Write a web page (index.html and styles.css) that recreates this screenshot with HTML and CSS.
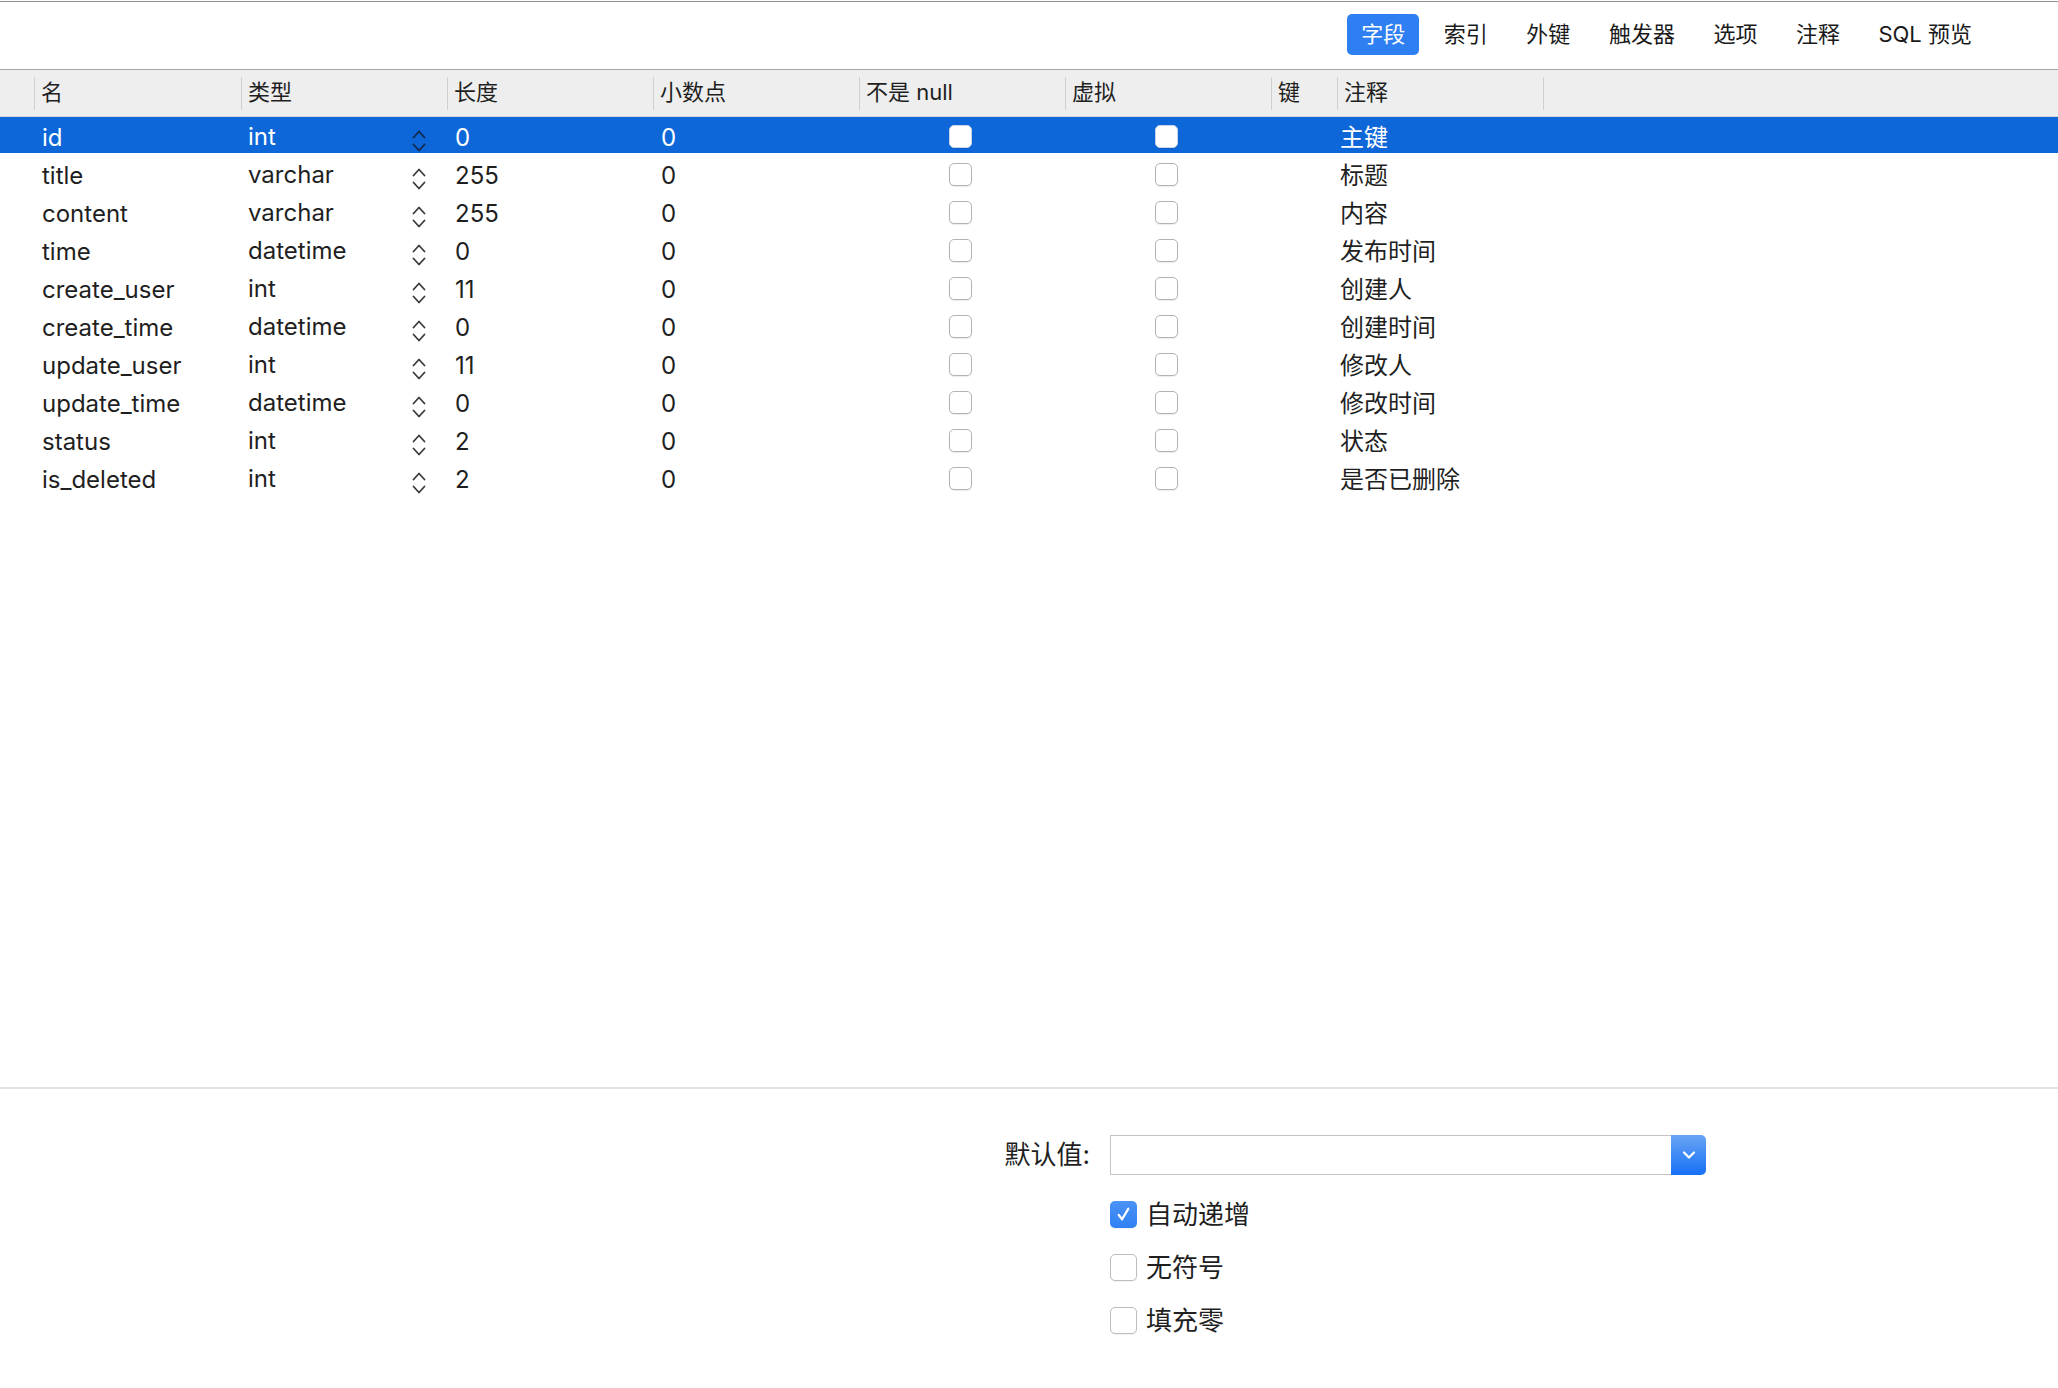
FILE: index.html
```html
<!DOCTYPE html>
<html lang="zh">
<head>
<meta charset="utf-8">
<title>表设计</title>
<link rel="stylesheet" href="styles.css">
</head>
<body>
<div class="app">
  <div class="toolbar">
    <div class="tabs">
      <span class="tab active">字段</span>
      <span class="tab">索引</span>
      <span class="tab">外键</span>
      <span class="tab">触发器</span>
      <span class="tab">选项</span>
      <span class="tab">注释</span>
      <span class="tab">SQL 预览</span>
    </div>
  </div>

  <div class="table">
    <div class="thead">
      <div class="th th-gutter"></div>
      <div class="th"><span>名</span></div>
      <div class="th"><span>类型</span></div>
      <div class="th"><span>长度</span></div>
      <div class="th"><span>小数点</span></div>
      <div class="th"><span>不是 null</span></div>
      <div class="th"><span>虚拟</span></div>
      <div class="th"><span>键</span></div>
      <div class="th"><span>注释</span></div>
      <div class="th th-rest"><span></span></div>
    </div>

    <div class="tbody">
      <div class="tr selected">
        <div class="td"></div><div class="td name">id</div>
        <div class="td type"><span>int</span><svg class="stepper" viewBox="0 0 14 22"><path d="M1.5 7.5 L7 1.5 L12.5 7.5 M1.5 14.5 L7 20.5 L12.5 14.5"/></svg></div>
        <div class="td num">0</div><div class="td num">0</div>
        <div class="td check"><span class="cb"></span></div><div class="td check"><span class="cb"></span></div>
        <div class="td"></div><div class="td comment">主键</div><div class="td"></div>
      </div>
      <div class="tr">
        <div class="td"></div><div class="td name">title</div>
        <div class="td type"><span>varchar</span><svg class="stepper" viewBox="0 0 14 22"><path d="M1.5 7.5 L7 1.5 L12.5 7.5 M1.5 14.5 L7 20.5 L12.5 14.5"/></svg></div>
        <div class="td num">255</div><div class="td num">0</div>
        <div class="td check"><span class="cb"></span></div><div class="td check"><span class="cb"></span></div>
        <div class="td"></div><div class="td comment">标题</div><div class="td"></div>
      </div>
      <div class="tr">
        <div class="td"></div><div class="td name">content</div>
        <div class="td type"><span>varchar</span><svg class="stepper" viewBox="0 0 14 22"><path d="M1.5 7.5 L7 1.5 L12.5 7.5 M1.5 14.5 L7 20.5 L12.5 14.5"/></svg></div>
        <div class="td num">255</div><div class="td num">0</div>
        <div class="td check"><span class="cb"></span></div><div class="td check"><span class="cb"></span></div>
        <div class="td"></div><div class="td comment">内容</div><div class="td"></div>
      </div>
      <div class="tr">
        <div class="td"></div><div class="td name">time</div>
        <div class="td type"><span>datetime</span><svg class="stepper" viewBox="0 0 14 22"><path d="M1.5 7.5 L7 1.5 L12.5 7.5 M1.5 14.5 L7 20.5 L12.5 14.5"/></svg></div>
        <div class="td num">0</div><div class="td num">0</div>
        <div class="td check"><span class="cb"></span></div><div class="td check"><span class="cb"></span></div>
        <div class="td"></div><div class="td comment">发布时间</div><div class="td"></div>
      </div>
      <div class="tr">
        <div class="td"></div><div class="td name">create_user</div>
        <div class="td type"><span>int</span><svg class="stepper" viewBox="0 0 14 22"><path d="M1.5 7.5 L7 1.5 L12.5 7.5 M1.5 14.5 L7 20.5 L12.5 14.5"/></svg></div>
        <div class="td num">11</div><div class="td num">0</div>
        <div class="td check"><span class="cb"></span></div><div class="td check"><span class="cb"></span></div>
        <div class="td"></div><div class="td comment">创建人</div><div class="td"></div>
      </div>
      <div class="tr">
        <div class="td"></div><div class="td name">create_time</div>
        <div class="td type"><span>datetime</span><svg class="stepper" viewBox="0 0 14 22"><path d="M1.5 7.5 L7 1.5 L12.5 7.5 M1.5 14.5 L7 20.5 L12.5 14.5"/></svg></div>
        <div class="td num">0</div><div class="td num">0</div>
        <div class="td check"><span class="cb"></span></div><div class="td check"><span class="cb"></span></div>
        <div class="td"></div><div class="td comment">创建时间</div><div class="td"></div>
      </div>
      <div class="tr">
        <div class="td"></div><div class="td name">update_user</div>
        <div class="td type"><span>int</span><svg class="stepper" viewBox="0 0 14 22"><path d="M1.5 7.5 L7 1.5 L12.5 7.5 M1.5 14.5 L7 20.5 L12.5 14.5"/></svg></div>
        <div class="td num">11</div><div class="td num">0</div>
        <div class="td check"><span class="cb"></span></div><div class="td check"><span class="cb"></span></div>
        <div class="td"></div><div class="td comment">修改人</div><div class="td"></div>
      </div>
      <div class="tr">
        <div class="td"></div><div class="td name">update_time</div>
        <div class="td type"><span>datetime</span><svg class="stepper" viewBox="0 0 14 22"><path d="M1.5 7.5 L7 1.5 L12.5 7.5 M1.5 14.5 L7 20.5 L12.5 14.5"/></svg></div>
        <div class="td num">0</div><div class="td num">0</div>
        <div class="td check"><span class="cb"></span></div><div class="td check"><span class="cb"></span></div>
        <div class="td"></div><div class="td comment">修改时间</div><div class="td"></div>
      </div>
      <div class="tr">
        <div class="td"></div><div class="td name">status</div>
        <div class="td type"><span>int</span><svg class="stepper" viewBox="0 0 14 22"><path d="M1.5 7.5 L7 1.5 L12.5 7.5 M1.5 14.5 L7 20.5 L12.5 14.5"/></svg></div>
        <div class="td num">2</div><div class="td num">0</div>
        <div class="td check"><span class="cb"></span></div><div class="td check"><span class="cb"></span></div>
        <div class="td"></div><div class="td comment">状态</div><div class="td"></div>
      </div>
      <div class="tr">
        <div class="td"></div><div class="td name">is_deleted</div>
        <div class="td type"><span>int</span><svg class="stepper" viewBox="0 0 14 22"><path d="M1.5 7.5 L7 1.5 L12.5 7.5 M1.5 14.5 L7 20.5 L12.5 14.5"/></svg></div>
        <div class="td num">2</div><div class="td num">0</div>
        <div class="td check"><span class="cb"></span></div><div class="td check"><span class="cb"></span></div>
        <div class="td"></div><div class="td comment">是否已删除</div><div class="td"></div>
      </div>
    </div>
  </div>

  <div class="divider"></div>

  <div class="form">
    <label class="form-label">默认值:</label>
    <div class="combo">
      <div class="combo-input"></div>
      <div class="combo-btn">
        <svg viewBox="0 0 14 10"><path d="M2 2.5 L7 7.5 L12 2.5"/></svg>
      </div>
    </div>
    <div></div>
    <div class="option"><span class="box checked"><svg viewBox="0 0 20 20"><path d="M5 10.5 L8.5 15 L15 4"/></svg></span><span>自动递增</span></div>
    <div></div>
    <div class="option"><span class="box"></span><span>无符号</span></div>
    <div></div>
    <div class="option"><span class="box"></span><span>填充零</span></div>
  </div>
</div>
</body>
</html>
```

FILE: styles.css
```css
* { box-sizing: border-box; }

html, body {
  margin: 0;
  padding: 0;
  background: #ffffff;
}

body {
  font-family: Inter, "Noto Sans CJK SC", sans-serif;
  color: #1f1f1f;
}

.app {
  width: 2058px;
  height: 1388px;
  display: flex;
  flex-direction: column;
  padding-top: 1px;
}

/* ---------- toolbar ---------- */
.toolbar {
  height: 68px;
  border-top: 1px solid #8f8f8f;
  display: flex;
  justify-content: flex-end;
  align-items: flex-start;
  padding: 12px 72px 0 0;
}

.tabs {
  display: flex;
  gap: 10.5px;
}

.tab {
  height: 41px;
  line-height: 41px;
  padding: 0 14px;
  font-size: 22px;
  color: #1a1a1a;
  border-radius: 5px;
  white-space: nowrap;
}

.tab.active {
  background: #2e80f2;
  color: #ffffff;
}

/* ---------- table ---------- */
.table {
  height: 1018px;
  display: flex;
  flex-direction: column;
}

.thead,
.tr {
  display: grid;
  grid-template-columns: 34px 207px 206px 206px 206px 206px 206px 66px 206px 1fr;
}

.thead {
  height: 48px;
  background: #eeeeee;
  border-top: 1px solid #a6a6a6;
  border-bottom: 1px solid #d6d6d6;
  align-items: center;
}

.th {
  height: 33px;
  display: flex;
  align-items: center;
  border-left: 1px solid #d0d0d0;
  padding-left: 6px;
  padding-bottom: 6px;
  font-size: 22px;
  color: #1f1f1f;
  white-space: nowrap;
}

.th-gutter {
  border-left: none;
}

.tbody {
  display: flex;
  flex-direction: column;
}

.tr {
  height: 38px;
  align-items: center;
  font-size: 24px;
}

.tr.selected {
  background: linear-gradient(#0d67d9 0, #0d67d9 36px, transparent 36px);
  color: #ffffff;
}

.td {
  height: 38px;
  line-height: 38px;
  padding-top: 2px;
  white-space: nowrap;
  align-self: start;
}

.name { padding-left: 8px; }
.num { padding-left: 8px; }
.comment { padding-left: 3px; }

.type {
  display: flex;
  justify-content: space-between;
  align-items: center;
  padding-left: 7px;
  padding-right: 21px;
}

.stepper {
  width: 14px;
  height: 22px;
  margin-top: 7px;
  fill: none;
  stroke: #3a3a3a;
  stroke-width: 1.8;
  stroke-linecap: round;
  stroke-linejoin: round;
}

.selected .stepper {
  stroke: #12284a;
}

.check {
  display: flex;
  justify-content: center;
  align-items: center;
  padding-top: 0;
  padding-right: 3px;
}

.cb {
  width: 23px;
  height: 23px;
  border-radius: 5px;
  background: #ffffff;
  border: 1px solid #b3b3b3;
  box-shadow: 0 1px 1px rgba(0, 0, 0, 0.08);
}

.selected .cb {
  border-color: #c9d6ea;
}

/* ---------- divider ---------- */
.divider {
  height: 2px;
  background: #e3e3e3;
}

/* ---------- form ---------- */
.form {
  display: grid;
  grid-template-columns: 1092px 596px;
  column-gap: 18px;
  row-gap: 26px;
  padding-top: 46px;
  font-size: 26px;
  color: #1f1f1f;
}

.form-label {
  height: 40px;
  line-height: 40px;
  text-align: right;
  padding-right: 2px;
}

.combo {
  height: 40px;
  display: flex;
}

.combo-input {
  flex: 1;
  border: 1px solid #c4c4c4;
  border-right: none;
  background: #ffffff;
}

.combo-btn {
  width: 35px;
  border-radius: 0 5px 5px 0;
  background: linear-gradient(#6aa4f4, #1670f6);
  display: flex;
  justify-content: center;
  align-items: center;
}

.combo-btn svg {
  width: 14px;
  height: 10px;
  fill: none;
  stroke: #ffffff;
  stroke-width: 2.2;
  stroke-linecap: round;
  stroke-linejoin: round;
}

.option {
  height: 27px;
  display: flex;
  align-items: center;
  gap: 9px;
  line-height: 27px;
}

.box {
  width: 27px;
  height: 27px;
  border-radius: 5px;
  border: 1px solid #bdbdbd;
  background: #ffffff;
  box-shadow: 0 1px 1px rgba(0, 0, 0, 0.06);
  display: flex;
  justify-content: center;
  align-items: center;
}

.box.checked {
  border: none;
  background: linear-gradient(#4b93f6, #2f80f3);
}

.box svg {
  width: 19px;
  height: 19px;
  fill: none;
  stroke: #ffffff;
  stroke-width: 2.4;
  stroke-linecap: round;
  stroke-linejoin: round;
}
```
